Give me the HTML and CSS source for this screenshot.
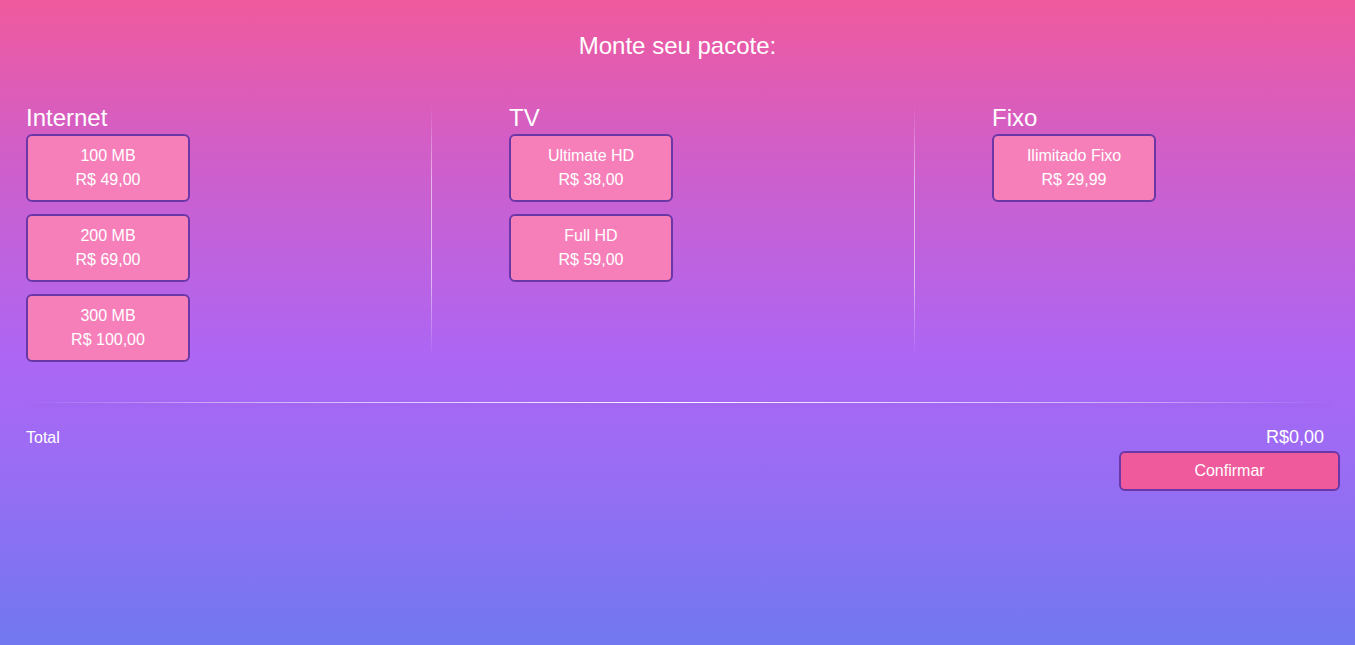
FILE: index.html
```html
<!DOCTYPE html>
<html lang="pt-BR">
<head>
<meta charset="utf-8">
<title>Monte seu pacote</title>
<link rel="stylesheet" href="styles.css">
</head>
<body>
<main class="page">
  <h1 class="title">Monte seu pacote:</h1>
  <section class="columns">
    <div class="col col-first">
      <h2 class="col-title">Internet</h2>
      <div class="option"><span>100 MB</span><span>R$ 49,00</span></div>
      <div class="option"><span>200 MB</span><span>R$ 69,00</span></div>
      <div class="option"><span>300 MB</span><span>R$ 100,00</span></div>
    </div>
    <div class="col col-mid">
      <h2 class="col-title">TV</h2>
      <div class="option"><span>Ultimate HD</span><span>R$ 38,00</span></div>
      <div class="option"><span>Full HD</span><span>R$ 59,00</span></div>
    </div>
    <div class="col col-last">
      <h2 class="col-title">Fixo</h2>
      <div class="option"><span>Ilimitado Fixo</span><span>R$ 29,99</span></div>
    </div>
  </section>
  <hr class="divider">
  <section class="summary">
    <div class="total-row">
      <span class="total-label">Total</span>
      <span class="total-value">R$0,00</span>
    </div>
    <div class="actions">
      <button class="confirm" type="button">Confirmar</button>
    </div>
  </section>
</main>
</body>
</html>
```
FILE: styles.css
```css
* { box-sizing: border-box; }
html, body {
  margin: 0;
  padding: 0;
  height: 645px;
}
body {
  font-family: "Liberation Sans", Arial, sans-serif;
  color: #ffffff;
  background: linear-gradient(180deg, #f05a9d 0%, #d35ec6 22%, #ad66f4 55%, #9a6cf4 72%, #7178f0 100%);
  overflow: hidden;
}
.page {
  height: 645px;
  padding-top: 32px;
}
.title {
  margin: 0;
  font-size: 24px;
  font-weight: normal;
  line-height: 28px;
  text-align: center;
}
.columns {
  display: grid;
  grid-template-columns: 406px 483px 1fr;
  margin-top: 43px;
  padding-left: 26px;
}
.col {
  display: flex;
  flex-direction: column;
  align-items: flex-start;
  position: relative;
}
.col-first::after,
.col-mid::after {
  content: "";
  position: absolute;
  right: 0;
  top: 2px;
  bottom: 5px;
  width: 1px;
  background: linear-gradient(180deg, rgba(255,255,255,0) 0%, rgba(255,255,255,0.55) 30%, rgba(255,255,255,0.55) 70%, rgba(255,255,255,0) 100%);
}
.col-mid, .col-last { padding-left: 77px; }
.col-title {
  margin: 1px 0 2px 0;
  font-size: 24px;
  font-weight: normal;
  line-height: 28px;
}
.option {
  width: 164px;
  height: 68px;
  margin-bottom: 12px;
  padding: 8px 4px;
  background: #f67fba;
  border: 2px solid #6b37a7;
  border-radius: 6px;
  display: flex;
  flex-direction: column;
  align-items: center;
  font-size: 16px;
  line-height: 24px;
}
.option:last-child { margin-bottom: 0; }
.divider {
  margin: 40px 26px 0 26px;
  height: 1px;
  border: 0;
  background: linear-gradient(90deg, rgba(255,255,255,0) 0%, rgba(255,255,255,0.45) 15%, rgba(255,255,255,0.95) 50%, rgba(255,255,255,0.45) 85%, rgba(255,255,255,0) 100%);
  box-shadow: 0 2px 4px rgba(120, 60, 160, 0.15);
}
.summary {
  padding: 22px 15px 0 26px;
}
.total-row {
  display: flex;
  justify-content: space-between;
  align-items: center;
  height: 24px;
  padding-right: 16px;
}
.total-label {
  font-size: 16px;
  padding-top: 2px;
}
.total-value {
  font-size: 18px;
}
.actions {
  display: flex;
  justify-content: flex-end;
  margin-top: 2px;
}
.confirm {
  width: 221px;
  height: 40px;
  background: #ef5a9d;
  border: 2px solid #6b37a7;
  border-radius: 6px;
  color: #ffffff;
  font-family: "Liberation Sans", Arial, sans-serif;
  font-size: 16px;
  padding: 0;
}
```
